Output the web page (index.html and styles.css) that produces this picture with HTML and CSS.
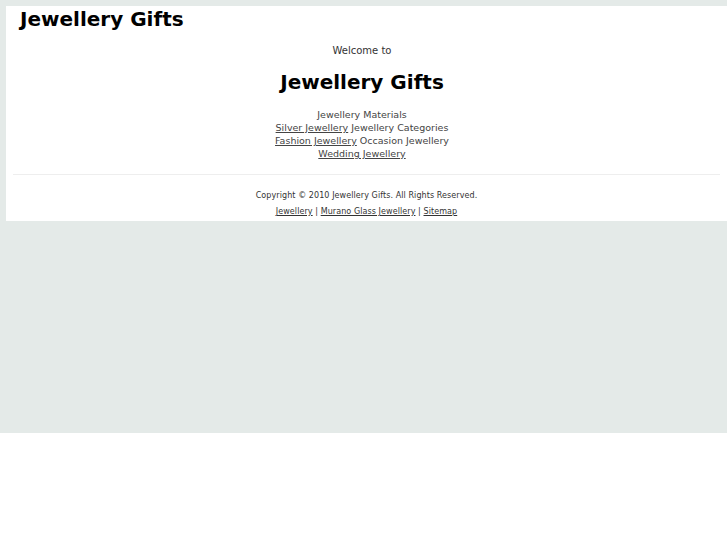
FILE: index.html
```html
<!DOCTYPE html>
<html lang="en">
<head>
    <meta charset="UTF-8">
    <title>Jewellery Gifts</title>
    <link rel="stylesheet" href="styles.css">
</head>
<body>
	<div class="page">
		<div class="main">
			<h1 class="logo">Jewellery Gifts</h1>

			<div class="content">
				<p class="welcome">Welcome to</p>
				<h2 class="title">Jewellery Gifts</h2>
				<div class="cats">
					Jewellery Materials<br>
					<a href="#">Silver Jewellery</a> Jewellery Categories<br>
					<a href="#">Fashion Jewellery</a> Occasion Jewellery<br>
					<a href="#">Wedding Jewellery</a>
				</div>
			</div>

			<div class="footer">
				<p class="copy">Copyright &copy; 2010 Jewellery Gifts. All Rights Reserved.</p>
				<p class="links"><a href="#">Jewellery</a> | <a href="#">Murano Glass Jewellery</a> | <a href="#">Sitemap</a></p>
			</div>
		</div>
	</div>
</body>
</html>
```

FILE: styles.css
```css
html {background: #fff; }
body {margin: 0; font-family: "DejaVu Sans", Verdana, sans-serif; color: #333; }
a {color: #333; }

.page {height: 433px; background: #e4eae8; padding: 6px 0 0 6px; box-sizing: border-box; }
.main {background: #fff; padding: 2px 7px 0; height: 215px; box-sizing: border-box; }

/* 상단 로고 */
.logo {margin: 0 0 0 7px; font-size: 20px; line-height: 23px; color: #000; }

.content {text-align: center; font-size: 10px; line-height: 13px; padding: 0 9px 14px 0; border-bottom: 1px solid #eee; }
.content .welcome {margin: 13px 0 0; }
.content .title {margin: 14px 0 0; font-size: 20px; line-height: 23px; color: #000; }
.content .cats {margin-top: 14px; font-size: 9.5px; color: #444; }
.content .cats a {color: #444; }

/* 하단 */
.footer {text-align: center; font-size: 8px; line-height: 16px; padding-top: 13px; letter-spacing: 0.08px; }
.footer p {margin: 0; }
```
